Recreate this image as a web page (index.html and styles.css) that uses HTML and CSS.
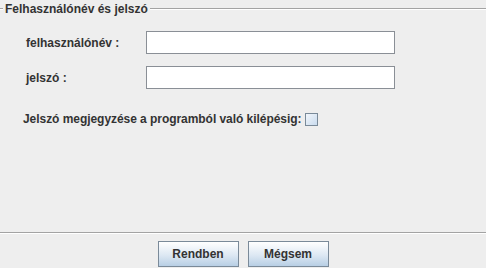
FILE: index.html
```html
<!DOCTYPE html>
<html lang="hu">
<head>
    <meta charset="UTF-8">
    <title>Bejelentkezés</title>
    <link rel="stylesheet" href="styles.css">
</head>
<body>
    <div class="dialog">
        <div class="group">
            <div class="group-title">
                <span class="group-line group-line-short"></span>
                <span class="group-text">Felhasználónév és jelszó</span>
                <span class="group-line"></span>
            </div>

            <div class="form-rows">
                <label class="form-label" for="user">felhasználónév :</label>
                <input class="text-field" id="user" type="text">

                <label class="form-label" for="pass">jelszó :</label>
                <input class="text-field" id="pass" type="password">
            </div>

            <div class="remember-row">
                <label for="remember">Jelszó megjegyzése a programból való kilépésig:</label>
                <input class="check" id="remember" type="checkbox">
            </div>
        </div>

        <div class="button-bar">
            <button class="btn">Rendben</button>
            <button class="btn">Mégsem</button>
        </div>
    </div>
</body>
</html>
```

FILE: styles.css
```css
* {
    margin: 0;
    padding: 0;
    box-sizing: border-box;
}

body {
    font-family: "Liberation Sans", Arial, sans-serif;
    font-size: 12px;
    font-weight: bold;
    color: #333333;
    background: #eeeeee;
    width: 486px;
    height: 268px;
    overflow: hidden;
}

.dialog {
    display: flex;
    flex-direction: column;
    height: 268px;
}

.group {
    flex: 1;
    padding-top: 2px;
}

.group-title {
    display: flex;
    align-items: center;
    height: 14px;
}

.group-text {
    padding: 0 2px;
    line-height: 14px;
}

.group-line {
    flex: 1;
    height: 2px;
    border-top: 1px solid #a3a3a3;
    border-bottom: 1px solid #ffffff;
}

.group-line-short {
    flex: 0 0 3px;
}

.form-rows {
    display: grid;
    grid-template-columns: 120px 249px;
    row-gap: 12px;
    align-items: center;
    padding: 15px 0 0 26px;
}

.form-label {
    line-height: 14px;
}

.text-field {
    height: 23px;
    border: 1px solid #8a8f96;
    background: #ffffff;
    outline: none;
    font: inherit;
    font-weight: normal;
    padding: 0 2px;
}

.remember-row {
    display: flex;
    align-items: center;
    gap: 4px;
    padding: 23px 0 0 23px;
    letter-spacing: -0.05px;
}

.check {
    appearance: none;
    width: 13px;
    height: 13px;
    border: 1px solid #7a8a99;
    background: linear-gradient(135deg, #f2f6fb 0%, #c9dbee 100%);
}

.button-bar {
    display: flex;
    justify-content: center;
    gap: 9px;
    height: 36px;
    padding-top: 8px;
    border-top: 1px solid #a3a3a3;
    box-shadow: inset 0 1px 0 #ffffff;
}

.btn {
    width: 81px;
    height: 26px;
    border: 1px solid #7a8a99;
    background: linear-gradient(#ffffff 0%, #dde8f3 55%, #b8cfe5 100%);
    font: inherit;
    color: #333333;
}
```
